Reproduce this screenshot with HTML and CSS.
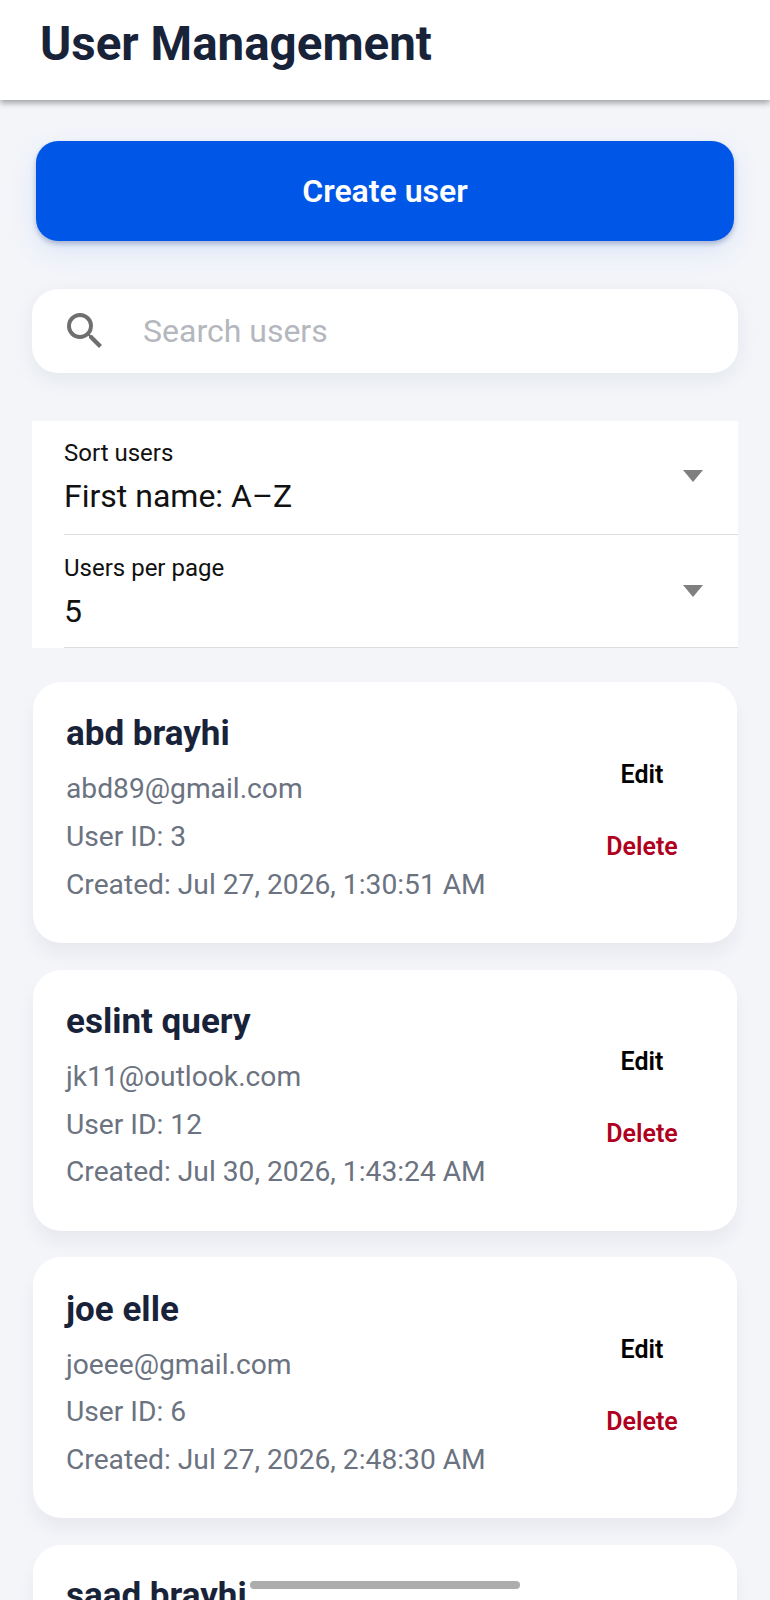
FILE: index.html
```html
<!DOCTYPE html>
<html>
<head>
	<title>User Management</title>
	<link rel="stylesheet" href="styles.css">
</head>
<body>

	<header class="topbar">
		<h1>User Management</h1>
	</header>

	<main class="content">
		<button class="create-btn">Create user</button>

		<div class="search">
			<svg class="search-icon" viewBox="3 3 18 18" width="36" height="36">
				<path fill="#6f6f6f" d="M15.5 14h-.79l-.28-.27A6.47 6.47 0 0 0 16 9.5 6.5 6.5 0 1 0 9.5 16c1.61 0 3.09-.59 4.23-1.57l.27.28v.79l5 4.99L20.49 19l-4.99-5zm-6 0C7.01 14 5 11.99 5 9.5S7.01 5 9.5 5 14 7.01 14 9.5 11.99 14 9.5 14z"/>
			</svg>
			<span class="search-text">Search users</span>
		</div>

		<div class="filters">
			<div class="select">
				<div class="select-text">
					<span class="select-label">Sort users</span>
					<span class="select-value">First name: A–Z</span>
				</div>
				<span class="arrow"></span>
			</div>
			<div class="select">
				<div class="select-text">
					<span class="select-label">Users per page</span>
					<span class="select-value">5</span>
				</div>
				<span class="arrow"></span>
			</div>
		</div>

		<div class="cards">
			<div class="card">
				<div class="info">
					<h2>abd brayhi</h2>
					<p>abd89@gmail.com</p>
					<p>User ID: 3</p>
					<p>Created: Jul 27, 2026, 1:30:51 AM</p>
				</div>
				<div class="actions">
					<span class="edit">Edit</span>
					<span class="delete">Delete</span>
				</div>
			</div>
			<div class="card">
				<div class="info">
					<h2>eslint query</h2>
					<p>jk11@outlook.com</p>
					<p>User ID: 12</p>
					<p>Created: Jul 30, 2026, 1:43:24 AM</p>
				</div>
				<div class="actions">
					<span class="edit">Edit</span>
					<span class="delete">Delete</span>
				</div>
			</div>
			<div class="card">
				<div class="info">
					<h2>joe elle</h2>
					<p>joeee@gmail.com</p>
					<p>User ID: 6</p>
					<p>Created: Jul 27, 2026, 2:48:30 AM</p>
				</div>
				<div class="actions">
					<span class="edit">Edit</span>
					<span class="delete">Delete</span>
				</div>
			</div>
			<div class="card">
				<div class="info">
					<h2>saad brayhi</h2>
				</div>
			</div>
		</div>
	</main>

	<div class="home-bar"></div>

</body>
</html>
```

FILE: styles.css
```css
html, body{
	margin: 0;
	height: 1600px;
	overflow: hidden;
}

body{
	position: relative;
	background-color: #f3f5f9;
	font-family: Roboto, sans-serif;
}

.topbar{
	height: 100px;
	box-sizing: border-box;
	padding: 16px 40px 0;
	background-color: #fff;
	box-shadow: 0 3px 6px rgba(0,0,0,.35);
	position: relative;
}

.topbar h1{
	margin: 0;
	font-size: 47.5px;
	line-height: 56px;
	font-weight: 700;
	color: #18233a;
}

.content{
	padding: 41px 32px 0;
}

.create-btn{
	display: block;
	width: 698px;
	height: 100px;
	margin: 0 4px;
	border: 0;
	border-radius: 22px;
	background-color: #0057e7;
	color: #fff;
	font-family: inherit;
	font-size: 32px;
	font-weight: 600;
	box-shadow: 0 3px 5px rgba(20,50,120,.28), 0 10px 28px rgba(0,87,231,.1);
}

.search{
	display: flex;
	align-items: center;
	height: 84px;
	margin-top: 48px;
	border-radius: 26px;
	background-color: #fff;
	box-shadow: 0 6px 20px rgba(30,40,70,.07);
}

.search-icon{
	margin-left: 35px;
}

.search-text{
	margin-left: 40px;
	font-size: 32px;
	color: #b4b7bd;
}

.filters{
	margin-top: 48px;
	background-color: #fff;
}

.select{
	display: flex;
	justify-content: space-between;
	align-items: center;
	height: 114px;
	box-sizing: border-box;
	margin-left: 32px;
	border-bottom: 1px solid #dcdde0;
}

.select:last-child{
	height: 113px;
	padding-top: 3px;
}

.select-text{
	display: flex;
	flex-direction: column;
}

.select-label{
	font-size: 24px;
	line-height: 28px;
	color: #111;
}

.select-value{
	margin-top: 8px;
	font-size: 32px;
	line-height: 42px;
	color: #111;
}

.arrow{
	width: 0;
	height: 0;
	margin-right: 35px;
	margin-bottom: 3px;
	border-left: 10px solid transparent;
	border-right: 10px solid transparent;
	border-top: 12px solid #7f7f7f;
}

.cards{
	margin-top: 34px;
}

.card{
	display: flex;
	justify-content: space-between;
	align-items: center;
	height: 261px;
	box-sizing: border-box;
	margin: 0 1px 26.6px;
	padding: 0 47px 4px 33px;
	border-radius: 28px;
	background-color: #fff;
	box-shadow: 0 12px 16px rgba(30,40,70,.05);
}

.card:last-child{
	align-items: flex-start;
	padding-top: 29px;
}

.info h2{
	margin: 0 0 9px;
	font-size: 35px;
	line-height: 44px;
	font-weight: 700;
	color: #18233a;
}

.info p{
	margin: 0;
	font-size: 28.2px;
	line-height: 47.7px;
	color: #6b7280;
}

.actions{
	display: flex;
	flex-direction: column;
	align-items: center;
	gap: 42px;
	width: 96px;
	font-size: 25px;
	line-height: 30px;
	font-weight: 600;
}

.edit{
	color: #000;
}

.delete{
	color: #b00020;
}

.home-bar{
	position: absolute;
	left: 250px;
	top: 1581px;
	width: 270px;
	height: 8px;
	border-radius: 4px;
	background-color: #adadad;
}
```
